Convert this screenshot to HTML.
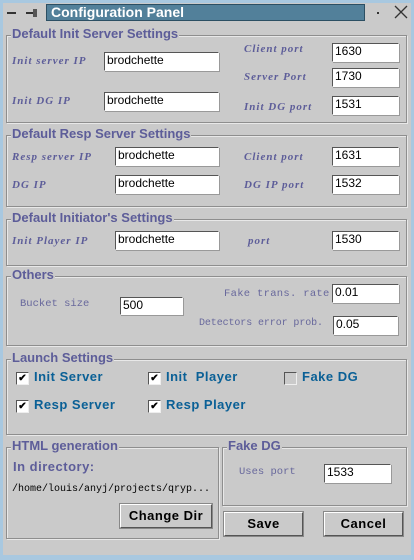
<!DOCTYPE html><html><head><style>
body{margin:0;width:414px;height:560px;background:#a8c8e0;position:relative;overflow:hidden;font-family:"Liberation Sans",sans-serif}
.a{position:absolute}
#win{position:absolute;left:3px;top:3px;width:408px;height:552px;background:#cacaca}
.box{position:absolute;border:1px solid #8e8e8e;box-shadow:inset 1px 1px 0 #e8e8e8,1px 1px 0 #e8e8e8}
.t{position:absolute;background:#cacaca;color:#5d5d99;font-weight:bold;font-size:13px;padding:0 1px;line-height:14px;white-space:nowrap}
.l{position:absolute;color:#5d5d99;font-family:"Liberation Serif",serif;font-style:italic;font-weight:bold;font-size:11px;letter-spacing:1px;white-space:nowrap}
.m{position:absolute;color:#68689c;font-family:"Liberation Mono",monospace;font-size:10.5px;white-space:nowrap}
.i{position:absolute;background:#fff;border-top:1px solid #555;border-left:1px solid #555;border-right:1px solid #fff;border-bottom:1px solid #fff;box-shadow:1px 1px 0 #999;font-size:12px;line-height:14px;padding-left:2px;box-sizing:border-box;color:#000}
.cb{position:absolute;width:11px;height:11px;background:#fff;border:1px solid #555;border-right-color:#eee;border-bottom-color:#eee;font-size:10px;line-height:11px;text-align:center;font-weight:bold}
.cl{position:absolute;color:#0a6096;font-weight:bold;font-size:13px;letter-spacing:.5px;white-space:nowrap}
.btn{position:absolute;border:1px solid #fff;border-right-color:#555;border-bottom-color:#555;outline:1px solid #888;background:#cacaca;font-weight:bold;font-size:13px;text-align:center;line-height:22px;letter-spacing:.5px;box-sizing:border-box}
</style></head><body>
<div id="win"></div>
<div class="a" style="left:0;top:0;width:414px;height:3px;background:#a8c8e0"></div>
<div class="a" style="left:7px;top:12px;width:9px;height:2px;background:#333"></div>
<div class="a" style="left:26px;top:12px;width:8px;height:2px;background:#333"></div>
<div class="a" style="left:33px;top:9px;width:4px;height:8px;background:#555"></div>
<div class="a" style="left:46px;top:4px;width:319px;height:17px;background:#52809a;border:1px solid #2c4f63;box-sizing:border-box;color:#fff;font-weight:bold;font-size:14px;line-height:15px;padding-left:4px">Configuration Panel</div>
<div class="a" style="left:377px;top:12px;width:2px;height:2px;background:#333"></div>
<svg class="a" style="left:394px;top:5px" width="14" height="14"><path d="M1 1L13 13M13 1L1 13" stroke="#333" stroke-width="1.3"/></svg>

<div class="box" style="left:6px;top:35px;width:399px;height:86px"></div>
<div class="t" style="left:11px;top:27px">Default Init Server Settings</div>
<div class="l" style="left:12px;top:55px">Init server IP</div>
<div class="i" style="left:104px;top:52px;width:115px;height:19px">brodchette</div>
<div class="l" style="left:12px;top:95px">Init DG IP</div>
<div class="i" style="left:104px;top:92px;width:115px;height:19px">brodchette</div>
<div class="l" style="left:244px;top:43px">Client port</div>
<div class="i" style="left:332px;top:43px;width:67px;height:19px">1630</div>
<div class="l" style="left:244px;top:71px">Server Port</div>
<div class="i" style="left:332px;top:68px;width:67px;height:19px">1730</div>
<div class="l" style="left:244px;top:101px">Init DG port</div>
<div class="i" style="left:332px;top:96px;width:67px;height:19px">1531</div>

<div class="box" style="left:6px;top:135px;width:399px;height:70px"></div>
<div class="t" style="left:11px;top:127px">Default Resp Server Settings</div>
<div class="l" style="left:12px;top:151px">Resp server IP</div>
<div class="i" style="left:115px;top:147px;width:104px;height:19px">brodchette</div>
<div class="l" style="left:12px;top:179px">DG IP</div>
<div class="i" style="left:115px;top:175px;width:104px;height:19px">brodchette</div>
<div class="l" style="left:244px;top:151px">Client port</div>
<div class="i" style="left:332px;top:147px;width:67px;height:19px">1631</div>
<div class="l" style="left:244px;top:179px">DG IP port</div>
<div class="i" style="left:332px;top:175px;width:67px;height:19px">1532</div>

<div class="box" style="left:6px;top:219px;width:399px;height:45px"></div>
<div class="t" style="left:11px;top:211px">Default Initiator's Settings</div>
<div class="l" style="left:12px;top:235px">Init Player IP</div>
<div class="i" style="left:115px;top:231px;width:104px;height:19px">brodchette</div>
<div class="l" style="left:248px;top:235px">port</div>
<div class="i" style="left:332px;top:231px;width:67px;height:19px">1530</div>

<div class="box" style="left:6px;top:276px;width:399px;height:68px"></div>
<div class="t" style="left:11px;top:268px">Others</div>
<div class="m" style="left:20px;top:298px">Bucket size</div>
<div class="i" style="left:120px;top:297px;width:63px;height:18px">500</div>
<div class="m" style="left:224px;top:288px;letter-spacing:.3px">Fake trans. rate</div>
<div class="i" style="left:332px;top:284px;width:67px;height:19px">0.01</div>
<div class="m" style="left:199px;top:318px;font-size:10px;letter-spacing:-.1px">Detectors error prob.</div>
<div class="i" style="left:333px;top:316px;width:65px;height:19px">0.05</div>

<div class="box" style="left:6px;top:359px;width:399px;height:74px"></div>
<div class="t" style="left:11px;top:351px">Launch Settings</div>
<div class="cb" style="left:16px;top:372px">✔</div><div class="cl" style="left:34px;top:369px">Init Server</div>
<div class="cb" style="left:148px;top:372px">✔</div><div class="cl" style="left:166px;top:369px">Init&nbsp; Player</div>
<div class="cb" style="left:284px;top:372px;background:#cacaca"></div><div class="cl" style="left:302px;top:369px">Fake DG</div>
<div class="cb" style="left:16px;top:400px">✔</div><div class="cl" style="left:34px;top:397px">Resp Server</div>
<div class="cb" style="left:148px;top:400px">✔</div><div class="cl" style="left:166px;top:397px">Resp Player</div>

<div class="box" style="left:6px;top:447px;width:211px;height:90px"></div>
<div class="t" style="left:11px;top:439px">HTML generation</div>
<div class="a" style="left:13px;top:459px;color:#5d5d99;font-weight:bold;font-size:13px;letter-spacing:.5px">In directory:</div>
<div class="a" style="left:12px;top:484px;font-family:'Liberation Mono',monospace;font-size:10px">/home/louis/anyj/projects/qryp...</div>
<div class="btn" style="left:120px;top:504px;width:92px;height:24px">Change Dir</div>

<div class="box" style="left:222px;top:447px;width:183px;height:57px"></div>
<div class="t" style="left:227px;top:439px">Fake DG</div>
<div class="m" style="left:239px;top:466px">Uses port</div>
<div class="i" style="left:324px;top:464px;width:67px;height:19px">1533</div>
<div class="btn" style="left:224px;top:512px;width:79px;height:24px">Save</div>
<div class="btn" style="left:324px;top:512px;width:79px;height:24px">Cancel</div>
</body></html>
